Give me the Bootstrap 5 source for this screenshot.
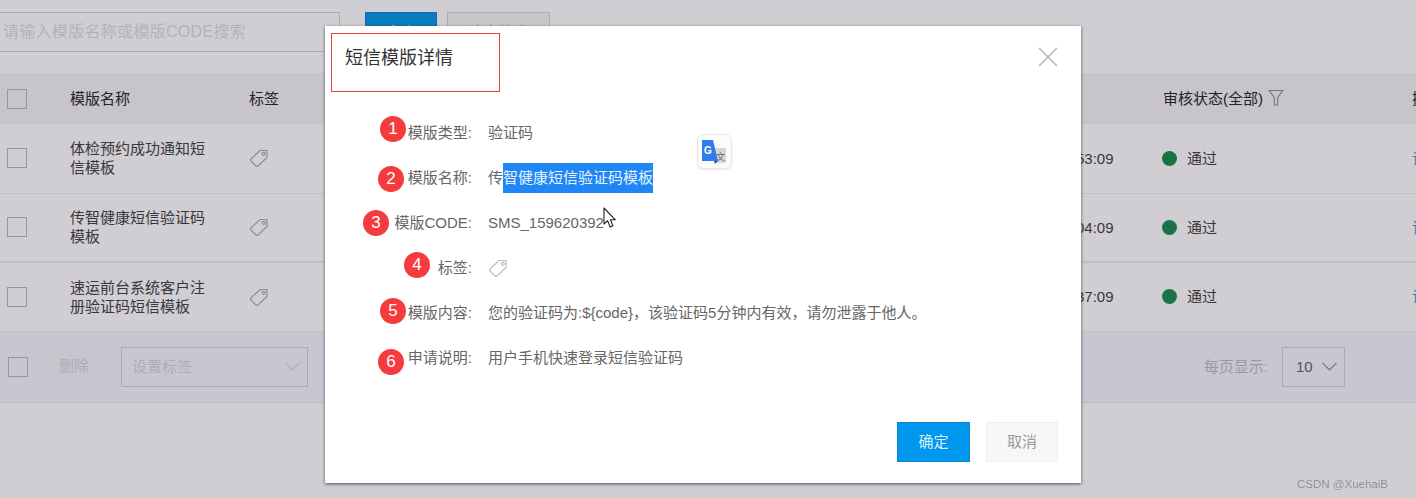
<!doctype html>
<html lang="zh-CN">
<head>
<meta charset="utf-8">
<title>短信模版详情</title>
<link rel="stylesheet" href="https://cdn.jsdelivr.net/npm/bootstrap@5.3.0/dist/css/bootstrap.min.css">
<style>
html,body{height:498px;overflow:hidden}
body{background:#d0cdd3;color:#39373c;font:15px/19px "Liberation Sans","Noto Sans CJK SC",sans-serif;position:relative;width:1416px}
.search-bar{height:73px;padding-top:12px}
.search-box{width:340px;height:40px;border:1px solid #aeacb1;border-left:0;padding-left:3px;color:#b5b2b8;font-size:16px;letter-spacing:.3px;line-height:38px}
.btn-find,.btn-clear{height:40px;border-radius:0;font-size:15px;padding:3px 0 0}
.btn-find{width:72px;margin-left:25px;background:#0a7cc0;border:1px solid #0a6fae;color:#cfe6f3}
.btn-clear{width:103px;margin-left:10px;background:#c8c5cb;border:1px solid #aeacb1;color:#77757a}
.tpl-table{table-layout:fixed;width:1512px;border-collapse:collapse;margin:0}
.tpl-table th,.tpl-table td{padding:0;vertical-align:middle;background:transparent;font-weight:400;border:0}
.tpl-table thead tr{height:51px;background:#c7c4ca;color:#232225}
.tpl-table tbody tr{height:69px;border-bottom:1px solid #c3c1c6;color:#39373c}
.tpl-table tbody tr.row-tall{border-bottom:2px solid #c0bec3}
.c-check{width:70px}.c-name{width:179px}.c-mid{width:827px}.c-time{width:87px}.c-state{width:249px}.c-op{width:100px}
.tick{display:block;width:20px;height:20px;border:1px solid #98969b;margin-left:7px}
.name-cell{padding-right:35px!important}
.tag-ico{display:block;width:20px;height:20px;fill:none;stroke:#8f8d92;stroke-width:1.2}
.state-cell{gap:10px}
.ok-dot{width:15px;height:15px;border-radius:50%;background:#1a7346;margin-left:-1px}
.tpl-table .op-link{color:#2a7fb8}
.filter-ico{width:16px;height:17px;fill:none;stroke:#77757b;stroke-width:1.1;margin-left:5px;vertical-align:-2px}
.tool-bar{height:71px;background:#c9c6d1;border-bottom:1px solid #bdbbc2;padding-right:71px;color:#a9a7ad}
.tool-bar .tick{margin-left:8px;margin-right:10px}
.btn-del{width:70px;height:40px;background:#c7c5ce;border:0;color:#aeacb4;border-radius:0;padding:0 0 0 2px;font-size:15px}
.pick{height:40px;border:1px solid #aba9b0;padding:0 7px 0 10px;line-height:38px}
.pick-tag{width:187px;margin-left:13px;color:#aeacb4}
.pick-size{width:63px;margin-left:14px;padding:0 7px 0 13px;color:#555358}
.pick svg{width:15px;height:9px;fill:none;stroke:#aeacb3;stroke-width:1.2}
.pick-size svg{stroke:#77757a}
.per-page{color:#9b999f}
.detail-box{position:absolute;left:325px;top:26px;width:756px;height:457px;background:#fff;border:0;border-radius:0;box-shadow:0 1px 3px rgba(40,40,40,.75);color:#666;z-index:5}
.title-frame{width:169px;height:59px;margin:7px 0 0 6px;border:1px solid #e6403f;padding:11px 0 0 13px;font-size:18px;line-height:26px;color:#333}
.close-x{width:20px;height:20px;margin:21px 23px 0 0;stroke:#b9b9b9;stroke-width:1.6;fill:none}
.info-list{margin-top:18px}
.info-row{height:45px}
.info-key{width:147px;text-align:right;margin-right:16px}
.picked{display:inline-block;background:#1e87f5;color:#e8f3fe;line-height:30px;height:30px}
.tag-soft{stroke:#bdbdbd}
.dlg-foot{margin-top:auto;padding:0 23px 21px 0}
.btn-yes,.btn-no{height:40px;border-radius:0;padding:0;font-size:15px}
.btn-yes{width:73px;background:#0097ee;border:1px solid #0686cf;color:#d8f2ff}
.btn-no{width:72px;background:#f7f7f9;border:1px solid #efeff1;color:#999;margin-left:16px}
.mark-no{position:absolute;width:26px;height:26px;border-radius:50%;background:#f53b3d;color:#fff;font-size:17px;line-height:25px;text-align:center}
.m1{left:55px;top:90px}.m2{left:53px;top:140px}.m3{left:38px;top:184px}.m4{left:79px;top:226px}.m5{left:55px;top:272px}.m6{left:53px;top:323px}
.trans-box{position:absolute;left:372px;top:108px;width:35px;height:35px;border:1px solid #e8e8e8;border-radius:6px;background:#fbfbfb;box-shadow:0 1px 2px rgba(0,0,0,.08)}
.trans-box svg{display:block;width:33px;height:33px}
.trans-g{font:700 10px "Liberation Sans",sans-serif;fill:#fff}
.trans-z{font:9px "Noto Sans CJK SC",sans-serif;fill:#666}
.pointer{position:absolute;left:278px;top:181px;width:14px;height:24px}
.water{position:absolute;right:28px;bottom:6px;font-size:11.5px;line-height:16px;color:#8a888d;text-shadow:0 0 1px #f2f2f2}
</style>
</head>
<body>
<div class="search-bar d-flex align-items-start">
  <div class="search-box">请输入模版名称或模版CODE搜索</div>
  <button class="btn btn-find" type="button">查询</button>
  <button class="btn btn-clear" type="button">清空筛选</button>
</div>

<table class="table tpl-table">
  <colgroup><col class="c-check"><col class="c-name"><col class="c-mid"><col class="c-time"><col class="c-state"><col class="c-op"></colgroup>
  <thead>
    <tr>
      <th><span class="tick"></span></th>
      <th>模版名称</th>
      <th>标签</th>
      <th></th>
      <th>审核状态(全部)<svg class="filter-ico" viewBox="0 0 16 17"><path d="M1 1.5H15L9.7 8.5V16H6.3V8.5Z"/></svg></th>
      <th>操作</th>
    </tr>
  </thead>
  <tbody>
    <tr>
      <td><span class="tick"></span></td>
      <td class="name-cell">体检预约成功通知短信模板</td>
      <td><svg class="tag-ico" viewBox="0 0 20 20"><path d="M11 2.5H18V9.5L9 18Q8 19 7 18L2 13Q1 12 2 11Z"/><circle cx="14.7" cy="5.8" r="1.5"/></svg></td>
      <td>53:09</td>
      <td><span class="d-flex align-items-center state-cell"><span class="ok-dot"></span><span>通过</span></span></td>
      <td class="op-link">详情</td>
    </tr>
    <tr class="row-tall">
      <td><span class="tick"></span></td>
      <td class="name-cell">传智健康短信验证码模板</td>
      <td><svg class="tag-ico" viewBox="0 0 20 20"><path d="M11 2.5H18V9.5L9 18Q8 19 7 18L2 13Q1 12 2 11Z"/><circle cx="14.7" cy="5.8" r="1.5"/></svg></td>
      <td>04:09</td>
      <td><span class="d-flex align-items-center state-cell"><span class="ok-dot"></span><span>通过</span></span></td>
      <td class="op-link">详情</td>
    </tr>
    <tr>
      <td><span class="tick"></span></td>
      <td class="name-cell">速运前台系统客户注册验证码短信模板</td>
      <td><svg class="tag-ico" viewBox="0 0 20 20"><path d="M11 2.5H18V9.5L9 18Q8 19 7 18L2 13Q1 12 2 11Z"/><circle cx="14.7" cy="5.8" r="1.5"/></svg></td>
      <td>37:09</td>
      <td><span class="d-flex align-items-center state-cell"><span class="ok-dot"></span><span>通过</span></span></td>
      <td class="op-link">详情</td>
    </tr>
  </tbody>
</table>

<div class="tool-bar d-flex align-items-center">
  <span class="tick"></span>
  <button class="btn btn-del" type="button">删除</button>
  <div class="pick pick-tag d-flex justify-content-between align-items-center"><span>设置标签</span><svg viewBox="0 0 15 9"><path d="M.5.8 7.5 8 14.5.8"/></svg></div>
  <span class="per-page ms-auto">每页显示:</span>
  <div class="pick pick-size d-flex justify-content-between align-items-center"><span>10</span><svg viewBox="0 0 15 9"><path d="M.5.8 7.5 8 14.5.8"/></svg></div>
</div>

<div class="detail-box d-flex flex-column">
  <div class="d-flex justify-content-between align-items-start">
    <div class="title-frame">短信模版详情</div>
    <svg class="close-x" viewBox="0 0 20 20"><path d="M1 1 19 19M19 1 1 19"/></svg>
  </div>
  <div class="info-list">
    <div class="info-row d-flex align-items-center"><div class="info-key">模版类型:</div><div>验证码</div></div>
    <div class="info-row d-flex align-items-center"><div class="info-key">模版名称:</div><div>传<span class="picked">智健康短信验证码模板</span></div></div>
    <div class="info-row d-flex align-items-center"><div class="info-key">模版CODE:</div><div>SMS_159620392</div></div>
    <div class="info-row d-flex align-items-center"><div class="info-key">标签:</div><svg class="tag-ico tag-soft" viewBox="0 0 20 20"><path d="M11 2.5H18V9.5L9 18Q8 19 7 18L2 13Q1 12 2 11Z"/><circle cx="14.7" cy="5.8" r="1.5"/></svg></div>
    <div class="info-row d-flex align-items-center"><div class="info-key">模版内容:</div><div>您的验证码为:${code}&#xFF0C;该验证码5分钟内有效&#xFF0C;请勿泄露于他人。</div></div>
    <div class="info-row d-flex align-items-center"><div class="info-key">申请说明:</div><div>用户手机快速登录短信验证码</div></div>
  </div>
  <div class="dlg-foot d-flex justify-content-end">
    <button class="btn btn-yes" type="button">确定</button>
    <button class="btn btn-no" type="button">取消</button>
  </div>
  <span class="mark-no m1">1</span><span class="mark-no m2">2</span><span class="mark-no m3">3</span><span class="mark-no m4">4</span><span class="mark-no m5">5</span><span class="mark-no m6">6</span>
  <div class="trans-box">
    <svg viewBox="0 0 33 33">
      <path d="M15 13H28V28H17Z" fill="#d6d6d8"/>
      <path d="M4 5H15L20 26H4Z" fill="#2f7de8"/>
      <path d="M16 26H20L17 29Z" fill="#2456b0"/>
      <text class="trans-g" x="6" y="19">G</text>
      <text class="trans-z" x="18" y="25">文</text>
    </svg>
  </div>
  <svg class="pointer" viewBox="0 0 14 24"><path d="M1 1V17L4.6 13.7 7.2 20 10 18.8 7.4 12.8H12.4Z" fill="#fff" stroke="#222" stroke-width="1.1" stroke-linejoin="round"/></svg>
</div>

<div class="water">CSDN @XuehaiB</div>
<script src="https://cdn.jsdelivr.net/npm/bootstrap@5.3.0/dist/js/bootstrap.bundle.min.js"></script>
</body>
</html>
